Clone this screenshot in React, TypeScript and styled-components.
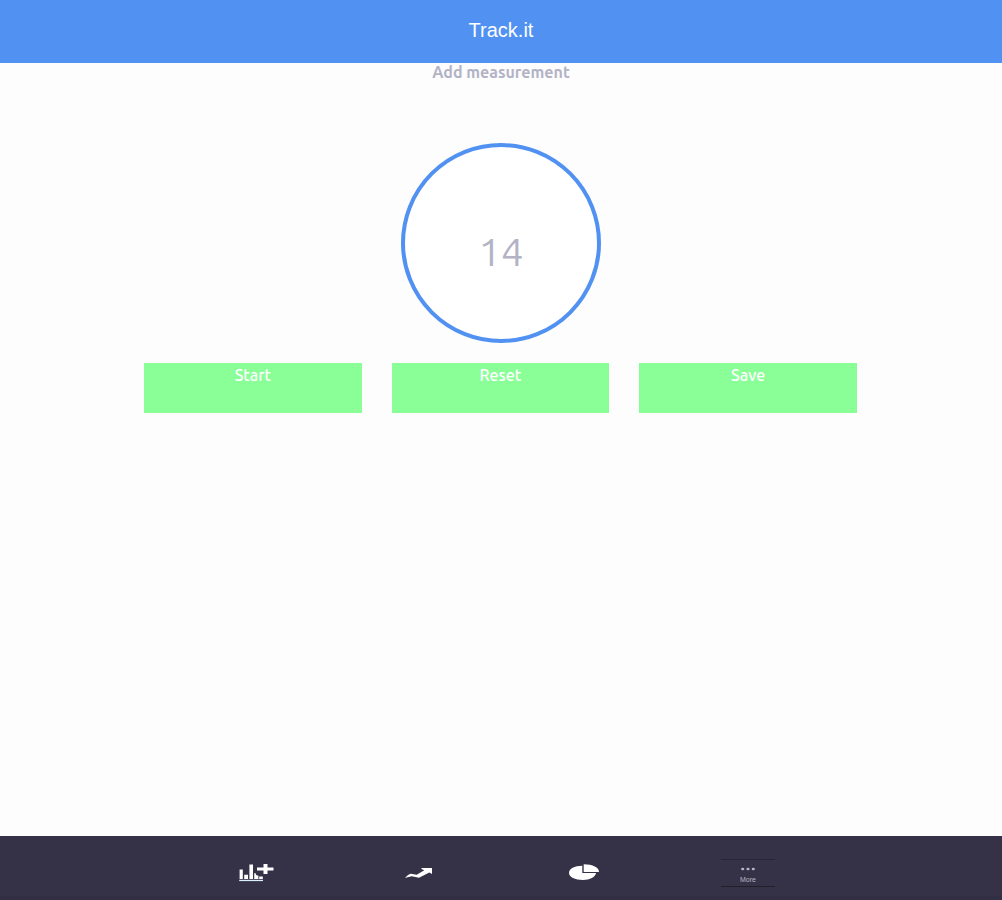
import React, { useEffect, useState } from "react";
import styled, { createGlobalStyle } from "styled-components";

const GlobalStyle = createGlobalStyle`
  * { box-sizing: border-box; }
  body {
    margin: 0;
    background: #fdfdfd;
    font-family: Ubuntu, "Noto Sans", sans-serif;
    font-size: 16px;
    color: #b3b3c6;
  }
`;

const Page = styled.div`
  min-height: 100vh;
  display: flex;
  flex-direction: column;
`;

const Header = styled.header`
  height: 63px;
  padding-top: 18px;
  background: #5191f2;
  text-align: center;
`;

const Title = styled.h1`
  margin: 0;
  font: 400 20px/24px "Liberation Sans", Arial, sans-serif;
  color: #ffffff;
`;

const Main = styled.main`
  flex: 1;
  display: flex;
  flex-direction: column;
`;

const Heading = styled.h2`
  margin: 0 0 62px;
  font-size: 16px;
  line-height: 18px;
  font-weight: 600;
  text-align: center;
`;

const Dial = styled.div`
  width: 200px;
  height: 200px;
  margin: 0 auto 20px;
  padding-top: 18px;
  display: flex;
  align-items: center;
  justify-content: center;
  border: 4px solid #5191f2;
  border-radius: 50%;
  background: #ffffff;
  font-size: 40px;
  font-weight: 400;
  line-height: 48px;
`;

const Actions = styled.div`
  display: grid;
  grid-template-columns: repeat(3, 1fr);
  gap: 30px;
  padding: 0 145px 0 144px;
`;

const ActionButton = styled.button`
  height: 50px;
  padding: 3px 0 0;
  display: flex;
  justify-content: center;
  align-items: flex-start;
  border: 0;
  background: #8aff98;
  color: #ffffff;
  font-family: inherit;
  font-size: 16px;
  font-weight: 500;
  line-height: 18px;
  cursor: pointer;
`;

const TabBar = styled.nav`
  height: 64px;
  padding: 22px 0 0 2px;
  display: flex;
  justify-content: center;
  align-items: flex-start;
  gap: 110px;
  background: #353147;
  border-bottom: 4px solid #322e43;
`;

const Tab = styled.a`
  display: block;
  width: 54px;
  height: 30px;

  svg {
    display: block;
    width: 54px;
    height: 30px;
  }
`;

const MeasureIcon = () => (
  <svg viewBox="0 0 54 30" fill="#ffffff" aria-hidden="true">
    <path d="M10.6 11.5h3.2V21h-3.2zM15.2 16.8h3.8V21h-3.8zM20.4 6.5h3.6V21h-3.6zM25.2 15.5l1-.8 1 2.3 2.2.8V21h-4.2zM30.2 18.6h3.6V21h-3.6z" />
    <path d="M10.2 21.8h23.8v1.3H10.2z" fill="#dceefa" />
    <path d="M34.5 6h4v3.6h6v2.8h-6V16h-4v-3.6H28V9.6h6.5z" />
  </svg>
);

const TrendIcon = () => (
  <svg viewBox="0 0 54 30" fill="#ffffff" aria-hidden="true">
    <path d="M12 20q4-4.2 6-4.2l5.7 1 7.6-4.5-2.8-1.2V10H39v6l-2.7-1.5L26 19.8l-7.3-1.6q-3 .4-6.7 1.8z" />
  </svg>
);

const PieIcon = () => (
  <svg viewBox="0 0 54 30" fill="#ffffff" aria-hidden="true">
    <path d="M25.3 7.8v7.1H39c-.6 4-6 7-13 7-8 0-14-3-14-7s5.500-7 13.300-7.100z" />
    <path d="M26.7 6.300c9 0 15.300 3.200 15.300 7.700H26.700z" />
  </svg>
);

const MoreIcon = () => (
  <svg viewBox="0 0 54 30" fill="#b8b6c2" aria-hidden="true">
    <path d="M0 1h54v1H0z" fill="#292638" />
    <path d="M0 28h54v1H0z" fill="#211f28" />
    <ellipse cx="21.7" cy="11" rx="1.6" ry="1.3" />
    <ellipse cx="27" cy="11" rx="1.6" ry="1.3" />
    <ellipse cx="32.3" cy="11" rx="1.6" ry="1.3" />
    <text x="27" y="24" textAnchor="middle" fontFamily="Liberation Sans, Arial, sans-serif" fontSize="7">
      More
    </text>
  </svg>
);

export default function App() {
  const [seconds, setSeconds] = useState(14);
  const [running, setRunning] = useState(false);

  useEffect(() => {
    if (!running) return;
    const timer = setInterval(() => setSeconds((value) => value + 1), 1000);
    return () => clearInterval(timer);
  }, [running]);

  const reset = () => {
    setRunning(false);
    setSeconds(0);
  };

  return (
    <Page>
      <GlobalStyle />
      <Header>
        <Title>Track.it</Title>
      </Header>
      <Main>
        <Heading>Add measurement</Heading>
        <Dial>{seconds}</Dial>
        <Actions>
          <ActionButton type="button" onClick={() => setRunning(true)}>Start</ActionButton>
          <ActionButton type="button" onClick={reset}>Reset</ActionButton>
          <ActionButton type="button" onClick={() => setRunning(false)}>Save</ActionButton>
        </Actions>
      </Main>
      <TabBar>
        <Tab href="#measure" aria-label="Add measurement"><MeasureIcon /></Tab>
        <Tab href="#trend" aria-label="Trend"><TrendIcon /></Tab>
        <Tab href="#share" aria-label="Breakdown"><PieIcon /></Tab>
        <Tab href="#more" aria-label="More"><MoreIcon /></Tab>
      </TabBar>
    </Page>
  );
}
